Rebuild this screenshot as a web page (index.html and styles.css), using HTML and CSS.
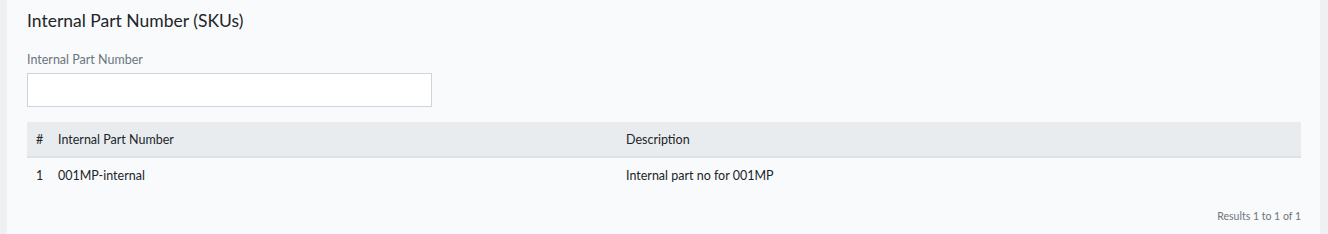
FILE: index.html
```html
<!DOCTYPE html>
<html lang="en">
<head>
    <meta charset="UTF-8">
    <meta name="viewport" content="width=device-width, initial-scale=1.0">
    <title>Internal Part Number (SKUs)</title>
    <link rel="stylesheet" href="styles.css">
</head>
<body>

    <div class="card">
        <h2 class="title">Internal Part Number (SKUs)</h2>

        <div class="field">
            <label for="ipn">Internal Part Number</label>
            <input type="text" id="ipn">
        </div>

        <table class="grid">
            <colgroup>
                <col class="col-num">
                <col class="col-ipn">
                <col>
            </colgroup>
            <thead>
                <tr>
                    <th>#</th>
                    <th>Internal Part Number</th>
                    <th>Description</th>
                </tr>
            </thead>
            <tbody>
                <tr>
                    <td>1</td>
                    <td>001MP-internal</td>
                    <td>Internal part no for 001MP</td>
                </tr>
            </tbody>
        </table>

        <div class="results">Results 1 to 1 of 1</div>
    </div>

</body>
</html>
```

FILE: styles.css
```css
body {
    margin: 0;
    padding: 0 8px 0 7px;
    background-color: #eef0f2;
    font-family: Lato, "Open Sans", sans-serif;
    color: #212529;
}

.card {
    background: #f9fafb;
    height: 234px;
    box-sizing: border-box;
    padding: 10px 20px 0 20px;
}

.title {
    margin: 0;
    font-size: 17.5px;
    font-weight: 400;
    line-height: 22px;
}

.field {
    margin-top: 19px;
}

.field label {
    display: block;
    font-size: 12.5px;
    color: #6c757d;
    line-height: 18px;
}

.field input {
    display: block;
    margin-top: 4px;
    width: 405px;
    height: 34px;
    box-sizing: border-box;
    border: 1px solid #ced4da;
    background: white;
}

.grid {
    margin-top: 15px;
    width: 1274px;
    border-collapse: collapse;
    table-layout: fixed;
    font-size: 12.5px;
}

.col-num { width: 22px; }
.col-ipn { width: 568px; }

.grid th {
    background: #e9ecef;
    font-weight: 400;
    text-align: left;
    height: 34px;
    padding: 0 0 0 9px;
    border-bottom: 2px solid #dee2e6;
}

.grid td {
    height: 34px;
    padding: 0 0 0 9px;
}

.results {
    width: 1274px;
    text-align: right;
    font-size: 10.5px;
    color: #6c757d;
    margin-top: 18px;
}
```
